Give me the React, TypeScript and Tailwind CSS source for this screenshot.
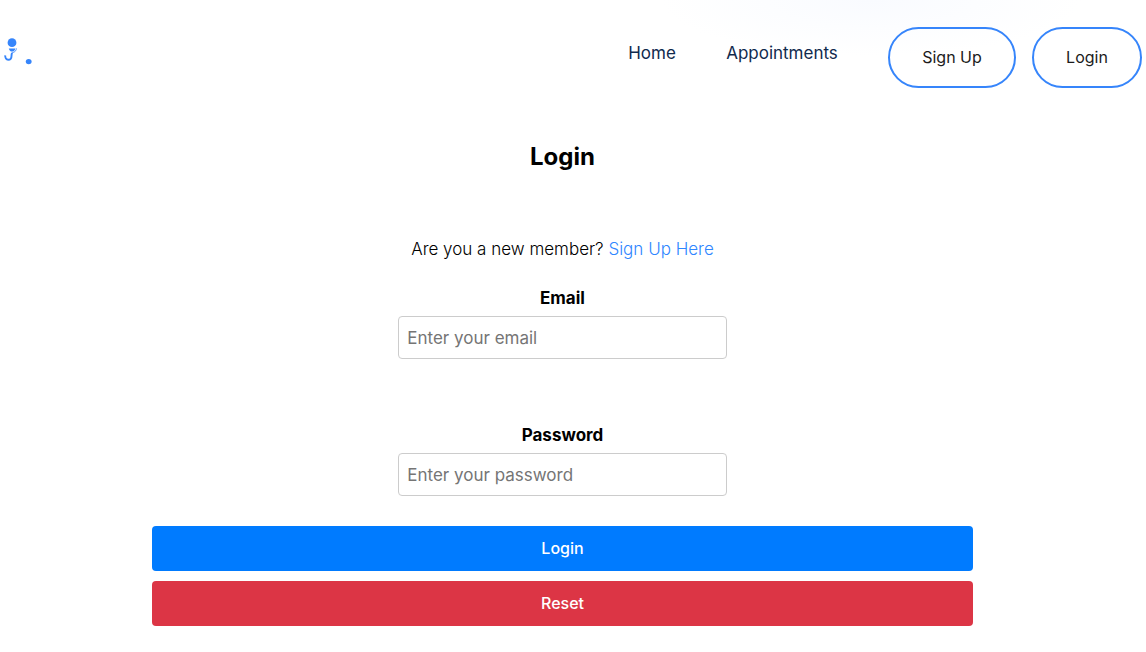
import React from "react";

function Logo() {
  return (
    <svg width="32" height="32" viewBox="0 0 32 32" fill="none" aria-hidden="true">
      <circle cx="12" cy="7.7" r="4.4" fill="#3685fb" />
      <path d="M8.8 13.4h6.6c-.4 2-1.700 3.200-3.300 3.200s-2.900-1.200-3.300-3.200z" fill="#3685fb" />
      <path d="M16.400 13.300c0 2.200-1.600 4.200-4.400 4.500" stroke="#3685fb" strokeWidth="0.8" />
      <path
        d="M5.200 20.400c-.1 2.600 1 4.400 3 4.400 2.200 0 3.300-1.600 3.300-3.800 0-1.300.1-2.200.6-3.200"
        stroke="#3685fb"
        strokeWidth="1.900"
      />
      <ellipse cx="28.700" cy="26.600" rx="2.900" ry="2.600" fill="#3685fb" />
    </svg>
  );
}

type FieldProps = { id: string; label: string; type: string; placeholder: string };

function Field({ id, label, type, placeholder }: FieldProps) {
  return (
    <div className="flex w-full flex-col items-center">
      <label htmlFor={id} className="h-8 text-[17px] leading-7 font-bold">
        {label}
      </label>
      <input
        id={id}
        type={type}
        placeholder={placeholder}
        className="h-[43px] w-[40%] rounded border border-[#ccc] bg-white px-2 text-[17px] placeholder:text-[#757575]"
      />
    </div>
  );
}

const outlineButton =
  "h-[61px] rounded-full border-2 border-[#3685fb] pb-0.5 text-base text-[#1b1b1b]";

const formButton = "h-[45px] w-full rounded pb-0.5 text-base font-medium text-white";

export default function App() {
  return (
    <div className="min-h-screen bg-white bg-[radial-gradient(ellipse_210px_56px_at_76%_0,#f9fbff,#ffffff)] font-['Inter','Open_Sans',sans-serif] text-black">
      <header className="flex items-start justify-between pt-[27px] pr-1">
        <a href="#" aria-label="Home page" className="mt-2">
          <Logo />
        </a>
        <nav className="flex items-start">
          <a href="#" className="mt-3 mr-12 w-12 text-center text-[17px] leading-7 text-[#102a4e]">
            Home
          </a>
          <a href="#" className="mt-3 mr-12 w-[116px] text-center text-[17px] leading-7 text-[#102a4e]">
            Appointments
          </a>
          <button type="button" className={`${outlineButton} mr-4 w-32`}>
            Sign Up
          </button>
          <button type="button" className={`${outlineButton} w-[110px]`}>
            Login
          </button>
        </nav>
      </header>

      <main className="flex flex-col items-center pt-[51px] pr-[21px] pb-6">
        <h1 className="text-2xl leading-9 font-bold">Login</h1>
        <p className="mt-[62px] text-[17px] leading-6 font-light">
          Are you a new member?{" "}
          <a href="#" className="text-[#2f86ff]">
            Sign Up Here
          </a>
        </p>
        <form className="mt-[23px] flex w-[73%] flex-col items-center" onSubmit={(e) => e.preventDefault()}>
          <Field id="email" label="Email" type="email" placeholder="Enter your email" />
          <div className="mt-[62px] w-full">
            <Field id="password" label="Password" type="password" placeholder="Enter your password" />
          </div>
          <button type="submit" className={`${formButton} mt-[30px] bg-[#007bff]`}>
            Login
          </button>
          <button type="reset" className={`${formButton} mt-2.5 bg-[#dc3545]`}>
            Reset
          </button>
        </form>
      </main>
    </div>
  );
}
